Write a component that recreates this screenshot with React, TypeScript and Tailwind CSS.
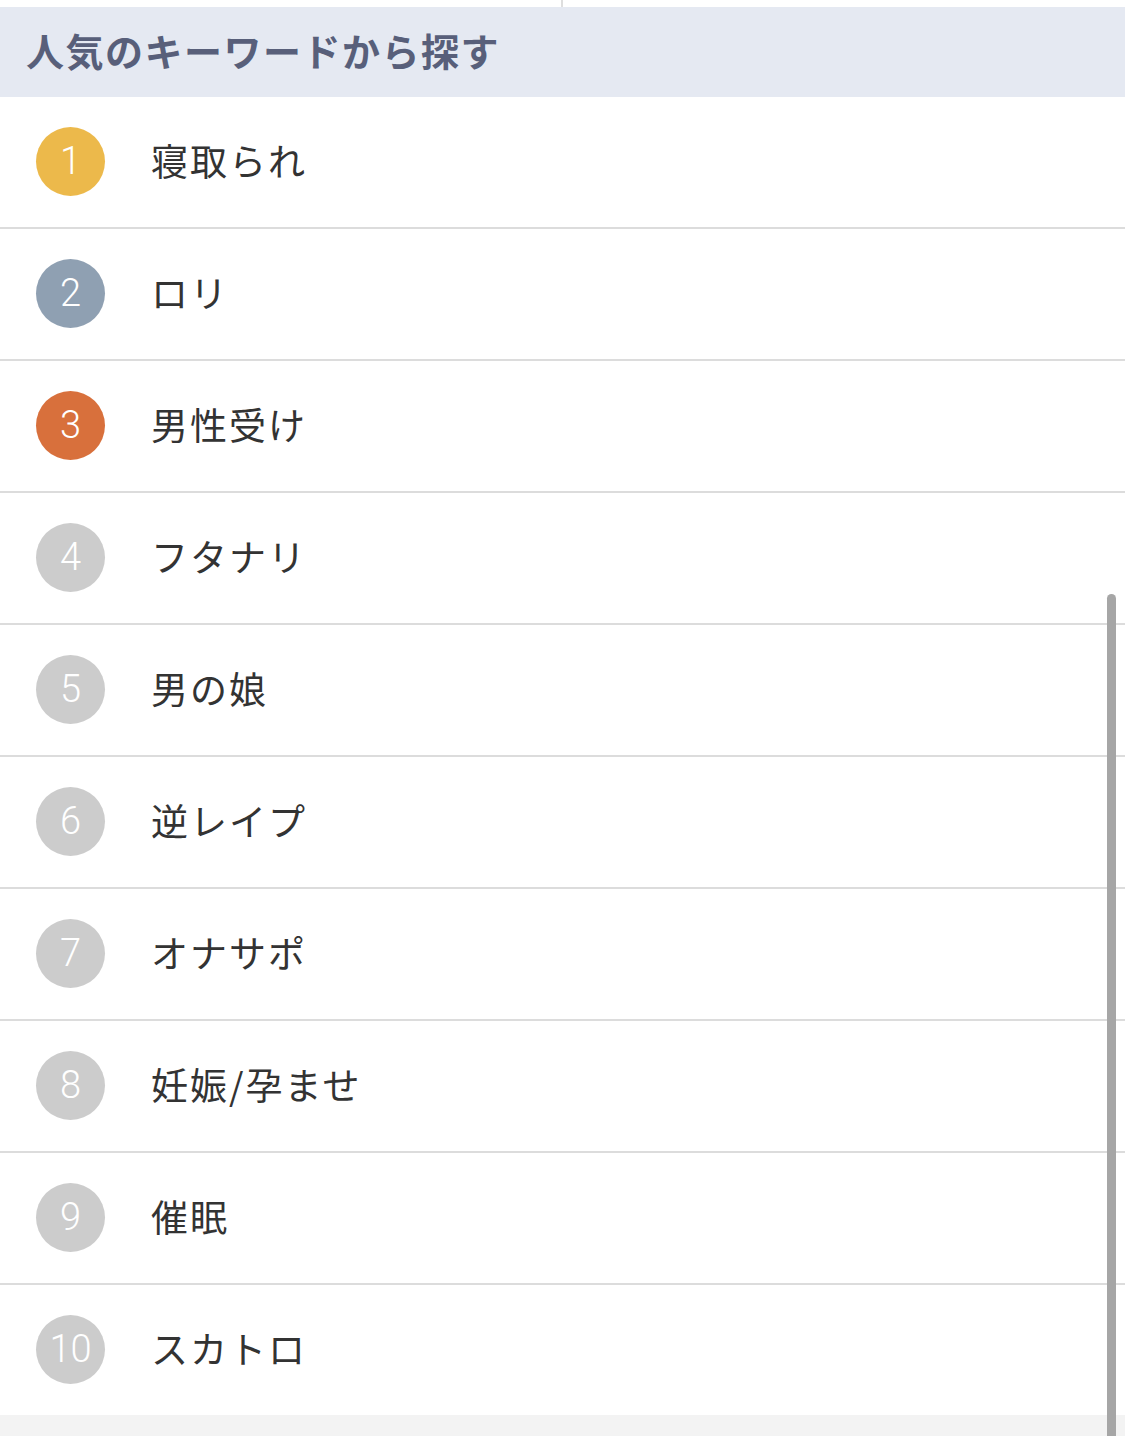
import React from "react";

const items: { n: number; label: string; color: string }[] = [
  { n: 1, label: "寝取られ", color: "bg-[#ecb94b]" },
  { n: 2, label: "ロリ", color: "bg-[#8fa0b2]" },
  { n: 3, label: "男性受け", color: "bg-[#d8703c]" },
  { n: 4, label: "フタナリ", color: "bg-[#cccccc]" },
  { n: 5, label: "男の娘", color: "bg-[#cccccc]" },
  { n: 6, label: "逆レイプ", color: "bg-[#cccccc]" },
  { n: 7, label: "オナサポ", color: "bg-[#cccccc]" },
  { n: 8, label: "妊娠/孕ませ", color: "bg-[#cccccc]" },
  { n: 9, label: "催眠", color: "bg-[#cccccc]" },
  { n: 10, label: "スカトロ", color: "bg-[#cccccc]" },
];

export default function App() {
  return (
    <div
      className="relative w-[1125px] h-[1436px] overflow-hidden bg-[#f3f3f3]"
      style={{ fontFamily: '"Noto Sans CJK JP", "Noto Sans", sans-serif' }}
    >
      <div className="h-[7px] bg-white flex">
        <div className="w-[561px]" />
        <div className="w-[2px] bg-[#dedede]" />
      </div>
      <div className="h-[90px] bg-[#e5e9f2] flex items-center pl-[26px]">
        <h2 className="text-[38px] font-bold text-[#585f7a] leading-none tracking-[1.5px] -mt-[4px]">
          人気のキーワードから探す
        </h2>
      </div>
      <ul className="bg-white">
        {items.map((it, i) => (
          <li
            key={it.n}
            className={`h-[130px] flex items-center ${i < items.length - 1 ? "border-b-2 border-[#dcdcdc] box-content" : ""}`}
          >
            <div
              className={`ml-[36px] w-[69px] h-[69px] -mt-[2px] rounded-full ${it.color} flex items-center justify-center text-white text-[38px] font-light leading-none`}
              style={{ fontFamily: 'Roboto, "Liberation Sans", sans-serif' }}
            >
              {it.n}
            </div>
            <span className="ml-[46px] -mt-[4px] text-[37px] text-[#333333] leading-none tracking-[2px]">
              {it.label}
            </span>
          </li>
        ))}
      </ul>
      <div className="absolute left-[1107px] top-[594px] w-[9px] h-[860px] rounded-full bg-[#a6a6a6]" />
    </div>
  );
}
